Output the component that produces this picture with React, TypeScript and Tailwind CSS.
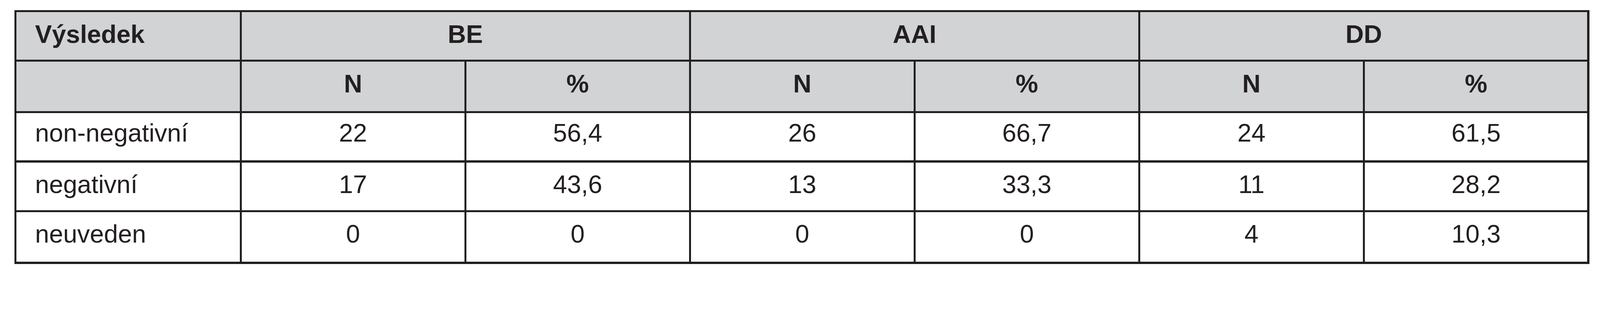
import React from "react"

const groups = ["BE", "AAI", "DD"]

const rows = [
  { label: "non-negativní", values: ["22", "56,4", "26", "66,7", "24", "61,5"], pad: "pt-[18.9px]" },
  { label: "negativní", values: ["17", "43,6", "13", "33,3", "11", "28,2"], pad: "pt-[24.3px]" },
  { label: "neuveden", values: ["0", "0", "0", "0", "4", "10,3"], pad: "pt-[23.4px]" },
]

export default function App() {
  return (
    <div className="min-h-screen bg-white pt-[26px] pl-[36.8px] font-['Liberation_Sans',Arial,sans-serif] text-[64.7px] leading-none text-[#231f20]">
      <div className="grid w-fit grid-cols-[571.4px_repeat(6,569.6px)] grid-rows-[121.3px_126.7px_121.3px_122.2px_126.7px] gap-[5.4px] bg-[#231f20] p-[5.4px]">
        {/* Header row 1 */}
        <div className="bg-[#d1d3d4] pl-[47.6px] pt-[24.3px] font-bold">Výsledek</div>
        {groups.map((g) => (
          <div key={g} className="col-span-2 bg-[#d1d3d4] pt-[24.3px] text-center font-bold">
            {g}
          </div>
        ))}

        {/* Header row 2 */}
        <div className="bg-[#d1d3d4]" />
        {groups.map((g) => (
          <React.Fragment key={g}>
            <div className="bg-[#d1d3d4] pt-[25.2px] text-center font-bold">N</div>
            <div className="bg-[#d1d3d4] pt-[25.2px] text-center font-bold">%</div>
          </React.Fragment>
        ))}

        {/* Data rows */}
        {rows.map((r) => (
          <React.Fragment key={r.label}>
            <div className={`bg-white pl-[47.6px] ${r.pad}`}>{r.label}</div>
            {r.values.map((v, i) => (
              <div key={i} className={`bg-white text-center ${r.pad}`}>
                {v}
              </div>
            ))}
          </React.Fragment>
        ))}
      </div>
    </div>
  )
}
